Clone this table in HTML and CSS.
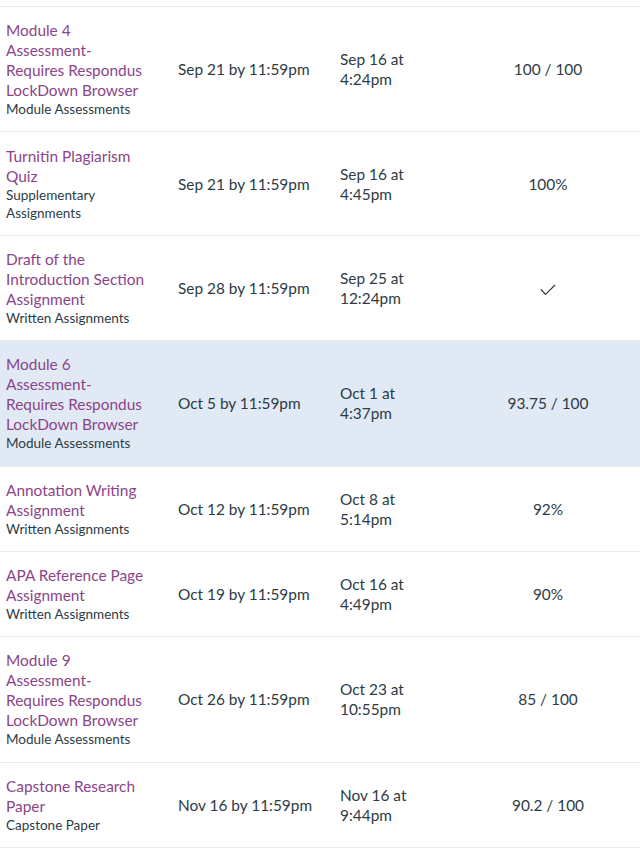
FILE: index.html
```html
<!DOCTYPE html>
<html>
<head>
<meta charset="utf-8">
<link rel="stylesheet" href="styles.css">
</head>
<body>
<div class="grades">
  <div class="row">
    <div class="name"><a class="title">Module 4 Assessment- Requires Respondus LockDown Browser</a><div class="group">Module Assessments</div></div>
    <div class="due">Sep 21 by 11:59pm</div>
    <div class="sub">Sep 16 at 4:24pm</div>
    <div class="score">100 / 100</div>
  </div>
  <div class="row">
    <div class="name"><a class="title">Turnitin Plagiarism Quiz</a><div class="group">Supplementary Assignments</div></div>
    <div class="due">Sep 21 by 11:59pm</div>
    <div class="sub">Sep 16 at 4:45pm</div>
    <div class="score">100%</div>
  </div>
  <div class="row">
    <div class="name"><a class="title">Draft of the Introduction Section Assignment</a><div class="group">Written Assignments</div></div>
    <div class="due">Sep 28 by 11:59pm</div>
    <div class="sub">Sep 25 at 12:24pm</div>
    <div class="score"><svg class="check" width="16" height="12" viewBox="0 0 16 12"><path d="M1 5.5 L5.5 10.5 L15 1" fill="none" stroke="#2d3b45" stroke-width="1.2"/></svg></div>
  </div>
  <div class="row active">
    <div class="name"><a class="title">Module 6 Assessment- Requires Respondus LockDown Browser</a><div class="group">Module Assessments</div></div>
    <div class="due">Oct 5 by 11:59pm</div>
    <div class="sub">Oct 1 at 4:37pm</div>
    <div class="score">93.75 / 100</div>
  </div>
  <div class="row">
    <div class="name"><a class="title">Annotation Writing Assignment</a><div class="group">Written Assignments</div></div>
    <div class="due">Oct 12 by 11:59pm</div>
    <div class="sub">Oct 8 at 5:14pm</div>
    <div class="score">92%</div>
  </div>
  <div class="row">
    <div class="name"><a class="title">APA Reference Page Assignment</a><div class="group">Written Assignments</div></div>
    <div class="due">Oct 19 by 11:59pm</div>
    <div class="sub">Oct 16 at 4:49pm</div>
    <div class="score">90%</div>
  </div>
  <div class="row">
    <div class="name"><a class="title">Module 9 Assessment- Requires Respondus LockDown Browser</a><div class="group">Module Assessments</div></div>
    <div class="due">Oct 26 by 11:59pm</div>
    <div class="sub">Oct 23 at 10:55pm</div>
    <div class="score">85 / 100</div>
  </div>
  <div class="row">
    <div class="name"><a class="title">Capstone Research Paper</a><div class="group">Capstone Paper</div></div>
    <div class="due">Nov 16 by 11:59pm</div>
    <div class="sub">Nov 16 at 9:44pm</div>
    <div class="score">90.2 / 100</div>
  </div>
</div>
</body>
</html>
```
FILE: styles.css
```css
html, body {
  margin: 0;
  padding: 0;
  background: #ffffff;
}
body {
  font-family: Lato, "Open Sans", sans-serif;
  color: #2d3b45;
}
.grades {
  margin-top: 6px;
  border-top: 1px solid #ececec;
}
.row {
  display: grid;
  grid-template-columns: 172px 162px 122px 1fr;
  align-items: center;
  padding: 13.2px 0;
  border-bottom: 1px solid #ececec;
}
.row.active {
  background: #e1eaf4;
}
.name {
  padding: 0 24px 0 6px;
}
.title {
  display: block;
  font-size: 15.4px;
  line-height: 20px;
  color: #8b4489;
  text-decoration: none;
}
.group {
  font-size: 13.5px;
  line-height: 18px;
  color: #2d3b45;
}
.due, .sub {
  padding-left: 6px;
  font-size: 15.4px;
  line-height: 20px;
}
.sub {
  padding-right: 12px;
}
.score {
  text-align: center;
  font-size: 15.4px;
  line-height: 20px;
}
.check {
  display: inline-block;
  vertical-align: middle;
}
```
